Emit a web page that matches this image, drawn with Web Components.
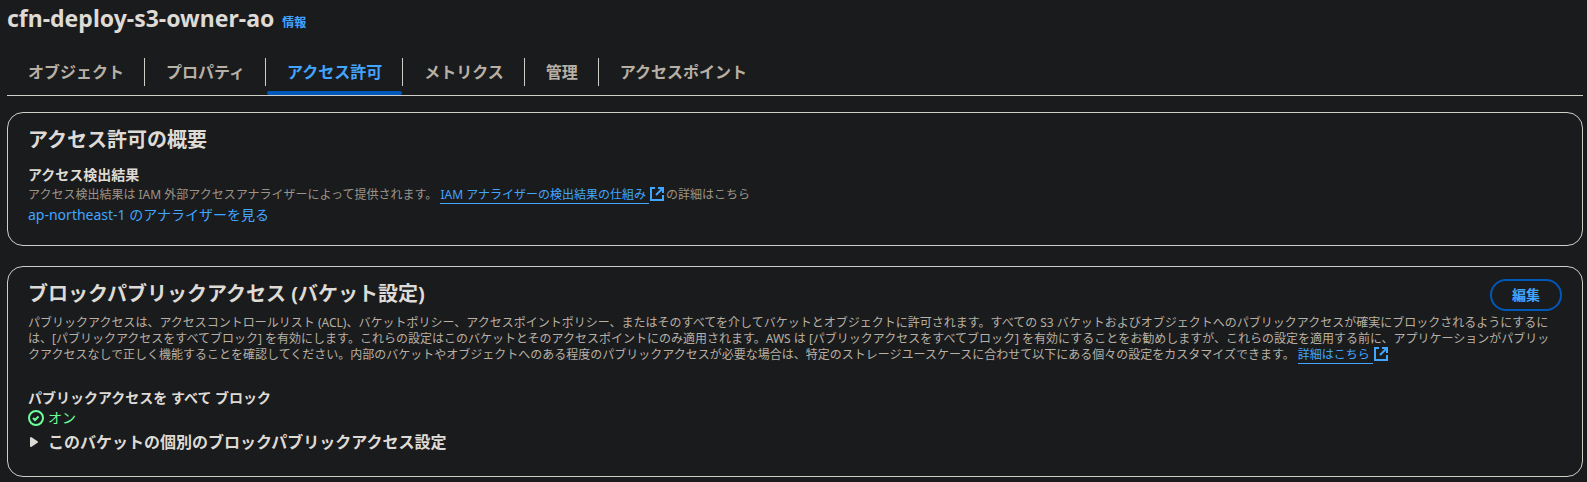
<!DOCTYPE html>
<html lang="ja">
<head>
<meta charset="utf-8">
<meta name="viewport" content="width=device-width, initial-scale=1">
<title>cfn-deploy-s3-owner-ao</title>
<style>
  :root {
    --bg: #1a1b1d;
    --heading: #dedad5;
    --text: #b8b0a4;
    --muted: #9d9488;
    --line: #d0cec9;
    --link: #42a5ff;
    --accent: #0058b8;
    --success: #6bff9b;
  }
  body {
    margin: 0;
    padding: 0 4px 4px 7px;
    background: var(--bg);
    color: var(--heading);
    font: 14px/20px "Noto Sans", "Noto Sans CJK JP", sans-serif;
  }
</style>
</head>
<body>
<bucket-header>cfn-deploy-s3-owner-ao<info-link slot="info" href="#info">情報</info-link></bucket-header>

<tab-bar>
  <tab-item>オブジェクト</tab-item>
  <tab-item>プロパティ</tab-item>
  <tab-item selected>アクセス許可</tab-item>
  <tab-item>メトリクス</tab-item>
  <tab-item>管理</tab-item>
  <tab-item>アクセスポイント</tab-item>
</tab-bar>

<panel-card>
  <span slot="title">アクセス許可の概要</span>
  <key-value>
    <span slot="label">アクセス検出結果</span>
    <span slot="hint">アクセス検出結果は IAM 外部アクセスアナライザーによって提供されます。<external-link href="#analyzer-help">IAM アナライザーの検出結果の仕組み</external-link>の詳細はこちら</span>
    <plain-link href="#analyzer">ap-northeast-1 のアナライザーを見る</plain-link>
  </key-value>
</panel-card>

<panel-card>
  <span slot="title">ブロックパブリックアクセス (バケット設定)</span>
  <pill-button slot="actions">編集</pill-button>
  <span slot="description">パブリックアクセスは、アクセスコントロールリスト (ACL)、バケットポリシー、アクセスポイントポリシー、またはそのすべてを介してバケットとオブジェクトに許可されます。すべての S3 バケットおよびオブジェクトへのパブリックアクセスが確実にブロックされるようにするには、[パブリックアクセスをすべてブロック] を有効にします。これらの設定はこのバケットとそのアクセスポイントにのみ適用されます。AWS は [パブリックアクセスをすべてブロック] を有効にすることをお勧めしますが、これらの設定を適用する前に、アプリケーションがパブリックアクセスなしで正しく機能することを確認してください。内部のバケットやオブジェクトへのある程度のパブリックアクセスが必要な場合は、特定のストレージユースケースに合わせて以下にある個々の設定をカスタマイズできます。 <external-link href="#learn-more">詳細はこちら</external-link></span>
  <key-value>
    <span slot="label">パブリックアクセスを すべて ブロック</span>
    <status-on>オン</status-on>
  </key-value>
  <expand-section>このバケットの個別のブロックパブリックアクセス設定</expand-section>
</panel-card>

<script>
  const define = (name, html, setup) => customElements.define(name, class extends HTMLElement {
    constructor() {
      super();
      this.attachShadow({ mode: 'open' }).innerHTML = html;
    }
    connectedCallback() {
      if (setup) setup(this, this.shadowRoot);
    }
  });
  const copyHref = (host, root) => {
    root.querySelector('a').href = host.getAttribute('href') || '#';
  };

  define('bucket-header', `
    <style>
      :host { display: flex; align-items: baseline; gap: 8px; padding-top: 3px; }
      h1 { margin: 0; font-size: 23px; line-height: 30px; font-weight: 700; color: var(--heading); }
    </style>
    <h1><slot></slot></h1><slot name="info"></slot>`);

  define('info-link', `
    <style>
      :host { display: inline; }
      a { color: var(--link); font-size: 12px; line-height: 16px; font-weight: 700; text-decoration: none; }
    </style>
    <a href="#"><slot></slot></a>`, copyHref);

  define('tab-bar', `
    <style>
      :host { display: block; margin: 16px 0; border-bottom: 1px solid var(--line); }
      [role=tablist] { display: flex; gap: 1px; padding: 9px 0 0 1px; }
    </style>
    <div role="tablist"><slot></slot></div>`);

  define('tab-item', `
    <style>
      :host { display: flex; flex-direction: column; }
      button {
        height: 28px; padding: 0 20px; border: 0; border-right: 1px solid var(--line);
        background: none; color: var(--text); font: inherit; font-size: 16px;
        line-height: 28px; font-weight: 700; white-space: nowrap; cursor: pointer;
      }
      :host(:last-of-type) button { border-right-color: transparent; }
      :host([selected]) button { color: var(--link); }
      i { height: 4px; margin: 5px 1px 0 0; border-radius: 2px; }
      :host([selected]) i { background: var(--accent); }
    </style>
    <button role="tab" type="button"><slot></slot></button><i></i>`,
    (host, root) => root.querySelector('button').setAttribute('aria-selected', host.hasAttribute('selected')));

  define('panel-card', `
    <style>
      :host { display: block; border: 1px solid var(--line); border-radius: 16px; padding: 12px 20px 20px; margin-bottom: 20px; }
      header { display: flex; justify-content: space-between; align-items: flex-start; }
      h2 { margin: 0; font-size: 20px; line-height: 30px; font-weight: 700; color: var(--heading); }
      .description { display: block; color: var(--text); font-size: 12px; line-height: 16px; }
      .description.filled { padding: 4px 8px 15px 0; }
      .body { display: block; padding-top: 10px; }
    </style>
    <header><h2><slot name="title"></slot></h2><slot name="actions"></slot></header>
    <div class="description"><slot name="description"></slot></div>
    <div class="body"><slot></slot></div>`,
    (host, root) => {
      const slot = root.querySelector('slot[name=description]');
      slot.addEventListener('slotchange', () =>
        slot.parentElement.classList.toggle('filled', slot.assignedNodes().length > 0));
    });

  define('key-value', `
    <style>
      :host { display: block; }
      .label { font-weight: 700; }
      .hint { color: var(--muted); font-size: 12px; }
    </style>
    <div class="label"><slot name="label"></slot></div>
    <div class="hint"><slot name="hint"></slot></div>
    <div><slot></slot></div>`);

  define('plain-link', `
    <style>
      :host { display: block; }
      a { color: var(--link); text-decoration: none; }
    </style>
    <a href="#"><slot></slot></a>`, copyHref);

  define('external-link', `
    <style>
      :host { display: inline; }
      a { color: var(--link); text-decoration: none; white-space: nowrap; }
      span { border-bottom: 1px solid currentColor; padding-right: 3px; }
      svg { width: 16px; height: 16px; margin: -2px 1px 0 0; vertical-align: -3px; fill: none; stroke: currentColor; stroke-width: 2; }
    </style>
    <a href="#" target="_blank"><span><slot></slot></span><svg viewBox="0 0 16 16" aria-hidden="true"><path d="M9 2h5v5M7 9l7-7"/><path d="M14 9v5H2V2h4"/></svg></a>`, copyHref);

  define('pill-button', `
    <style>
      :host { display: block; flex: none; }
      button {
        height: 32px; padding: 0 20px; border: 2px solid var(--accent); border-radius: 16px;
        background: none; color: var(--link); font: inherit; font-weight: 700; cursor: pointer;
      }
    </style>
    <button type="button"><slot></slot></button>`);

  define('status-on', `
    <style>
      :host { display: flex; align-items: center; gap: 4px; color: var(--success); }
      svg { width: 16px; height: 16px; fill: none; stroke: currentColor; stroke-width: 2; }
    </style>
    <svg viewBox="0 0 16 16" aria-hidden="true"><circle cx="8" cy="8" r="7"/><path d="m5 8 2 2 3.521-3.521"/></svg><span><slot></slot></span>`);

  define('expand-section', `
    <style>
      :host { display: block; }
      summary {
        display: flex; align-items: center; gap: 4px; padding: 2px 0;
        font-size: 16px; line-height: 24px; font-weight: 700; list-style: none; cursor: pointer;
      }
      svg { width: 16px; height: 16px; fill: currentColor; stroke: currentColor; stroke-width: 2; stroke-linejoin: round; }
    </style>
    <details><summary><svg viewBox="0 0 16 16" aria-hidden="true"><path d="M3 4v8l6-4z"/></svg><slot></slot></summary></details>`);
</script>
</body>
</html>
